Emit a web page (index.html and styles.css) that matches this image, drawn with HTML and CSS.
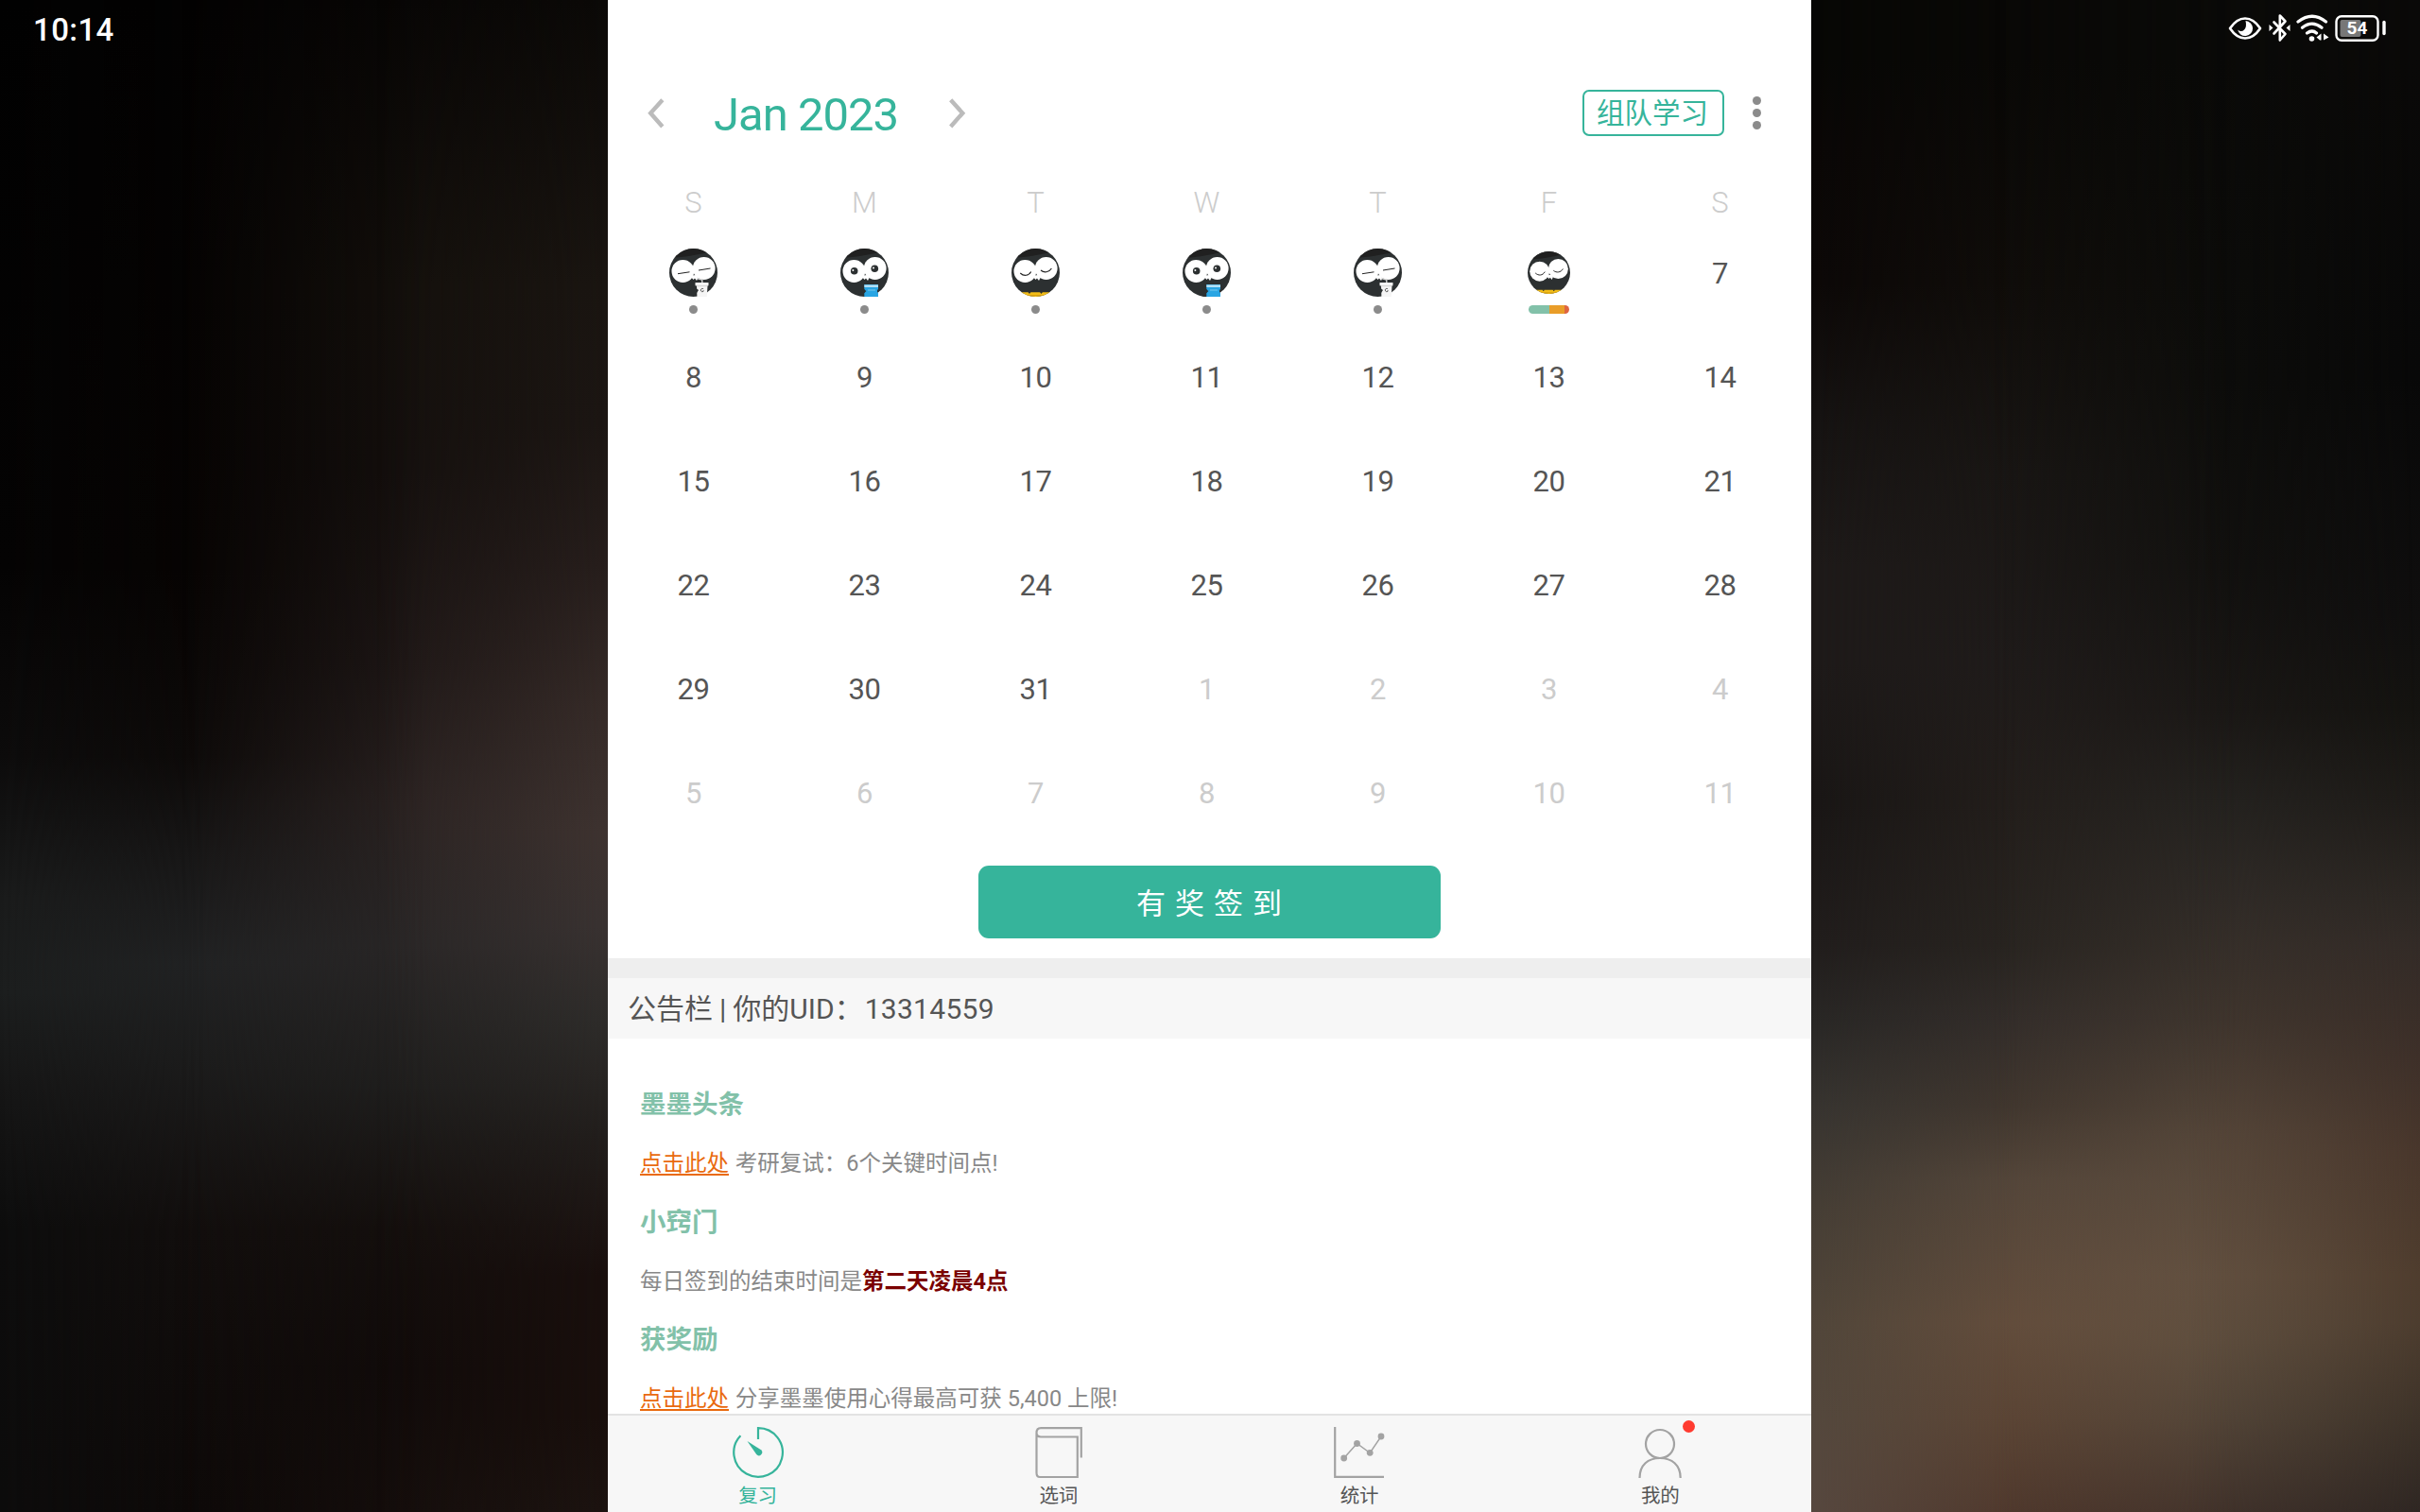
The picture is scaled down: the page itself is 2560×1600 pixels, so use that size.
FILE: index.html
```html
<!DOCTYPE html>
<html lang="zh-CN">
<head>
<meta charset="utf-8">
<title>Calendar</title>
<link rel="stylesheet" href="styles.css">
</head>
<body>
<svg width="0" height="0" class="defs">
  <defs>
    <clipPath id="disc"><circle cx="25.5" cy="25.5" r="25.5"/></clipPath>
    <symbol id="face" viewBox="0 0 51 51">
      <rect width="51" height="51" fill="#2c3031"/>
      <path d="M0 0H51V2C38 4 30 8 0 10Z" fill="#202020"/>
      <circle cx="14.4" cy="24" r="11.9" fill="#fff"/>
      <circle cx="36.7" cy="21" r="11.9" fill="#fff"/>
      <path d="M22 29L28 28L30.5 31L29 34L27 31.5L25.5 33Z" fill="#fff"/>
    </symbol>
    <symbol id="owl-drink" viewBox="0 0 51 51">
      <g clip-path="url(#disc)">
        <use href="#face" width="51" height="51"/>
        <path d="M9 26.7L21.5 24.8M31 23L43.5 21" stroke="#222" stroke-width="1" fill="none"/>
      </g>
      <path d="M29.5 31.5L34.8 33V37" stroke="#ddd" stroke-width="1.3" fill="none"/>
      <path d="M27.5 36H41.5V39.3H40.5L39.8 51H29.4L29 39.3H27.5Z" fill="#f5f5f5"/>
      <path d="M28.5 39.6H40.5" stroke="#ccc" stroke-width=".8"/>
      <path d="M36.1 42.7A1.7 1.7 0 1 0 36 45.4V44" stroke="#555" stroke-width=".9" fill="none"/>
      <path d="M28.4 42L31 44L29 47Z" fill="#2c3031"/>
    </symbol>
    <symbol id="owl-awake" viewBox="0 0 51 51">
      <g clip-path="url(#disc)">
        <use href="#face" width="51" height="51"/>
        <circle cx="14.7" cy="23.7" r="3.8" fill="#2c3031"/><circle cx="13.4" cy="23" r="1" fill="#fff"/>
        <circle cx="36.3" cy="21.2" r="3.8" fill="#2c3031"/><circle cx="35" cy="20.5" r="1" fill="#fff"/>
      </g>
      <path d="M25.3 38H40V43L39 44V46L40 47V51H25.3V47L26.3 46V44L25.3 43Z" fill="#29a5e3"/>
      <path d="M25.3 38.6H40" stroke="#7ac9ee" stroke-width="1"/>
      <path d="M25.3 40H40" stroke="#fff" stroke-width="1.3"/>
      <path d="M29 44H37" stroke="#7ac9ee" stroke-width="1"/>
      <path d="M24 43L27.5 45L24 48Z" fill="#2c3031"/>
    </symbol>
    <symbol id="owl-sleep" viewBox="0 0 51 51">
      <g clip-path="url(#disc)">
        <use href="#face" width="51" height="51"/>
        <path d="M9.3 26C13 29.5 18 29.2 20.7 24.5M31 23C34.5 26 39.7 25.5 42.4 21" stroke="#222" stroke-width="1.1" fill="none"/>
        <path d="M8 46.3H43V51H8Z" fill="#f3bd17"/>
        <path d="M8 49.5H43" stroke="#d69f10" stroke-width="1"/>
        <path d="M17.5 46h3l-1.5 2zM30 46h3l-1.5 2z" fill="#2c3031"/>
      </g>
    </symbol>
  </defs>
</svg>

<div class="screen">
  <aside class="side left">
    <i class="wash a"></i><i class="wash b"></i><i class="wash c"></i><i class="wash d"></i>
    <time class="clock">10:14</time>
  </aside>

  <main class="app">
    <header class="head">
      <svg class="chev" width="18" height="32" viewBox="0 0 18 32"><path d="M15.8 1.8L3.2 15.7L15.8 30"/></svg>
      <h1 class="month">Jan 2023</h1>
      <svg class="chev" width="18" height="32" viewBox="0 0 18 32"><path d="M1.7 1.8L14.3 15.7L1.7 30"/></svg>
      <button class="team">组队学习</button>
      <div class="more"><i></i><i></i><i></i></div>
    </header>

    <section class="weekdays"><span>S</span><span>M</span><span>T</span><span>W</span><span>T</span><span>F</span><span>S</span></section>
    <section class="days">
      <div class="done"><svg width="51" height="51"><use href="#owl-drink"/></svg><i class="dot"></i></div>
      <div class="done"><svg width="51" height="51"><use href="#owl-awake"/></svg><i class="dot"></i></div>
      <div class="done"><svg width="51" height="51"><use href="#owl-sleep"/></svg><i class="dot"></i></div>
      <div class="done"><svg width="51" height="51"><use href="#owl-awake"/></svg><i class="dot"></i></div>
      <div class="done"><svg width="51" height="51"><use href="#owl-drink"/></svg><i class="dot"></i></div>
      <div class="done today"><svg width="45" height="45"><use href="#owl-sleep"/></svg><i class="bar"></i></div>
      <div>7</div>
      <div>8</div><div>9</div><div>10</div><div>11</div><div>12</div><div>13</div><div>14</div>
      <div>15</div><div>16</div><div>17</div><div>18</div><div>19</div><div>20</div><div>21</div>
      <div>22</div><div>23</div><div>24</div><div>25</div><div>26</div><div>27</div><div>28</div>
      <div>29</div><div>30</div><div>31</div><div class="next">1</div><div class="next">2</div><div class="next">3</div><div class="next">4</div>
      <div class="next">5</div><div class="next">6</div><div class="next">7</div><div class="next">8</div><div class="next">9</div><div class="next">10</div><div class="next">11</div>
    </section>

    <button class="checkin">有奖签到</button>

    <div class="notice">公告栏<span class="sep">|</span>你的UID：<span class="uid">13314559</span></div>
    <section class="news">
      <h2>墨墨头条</h2>
      <p><a>点击此处</a> 考研复试：6个关键时间点!</p>
      <h2>小窍门</h2>
      <p>每日签到的结束时间是<b>第二天凌晨4点</b></p>
      <h2>获奖励</h2>
      <p><a>点击此处</a> 分享墨墨使用心得最高可获 <span class="amount">5,400</span> 上限!</p>
    </section>

    <nav class="tabs">
      <div class="tab active">
        <svg width="54" height="54" viewBox="0 0 54 54"><path d="M27 13V1.2A25.8 25.8 0 1 1 8.4 9.2" /><path class="solid" d="M15.5 15L30 24.2A3.4 3.4 0 1 1 25.2 29Z"/></svg>
        <span>复习</span>
      </div>
      <div class="tab">
        <svg width="54" height="54" viewBox="0 0 54 54"><path d="M3.5 6.5Q3.5 1.2 8 1.2H50.8V32.5M3.5 6V48.5Q3.5 53 7 53H46.8V10.5H8Q3.5 10.500 3.5 6"/></svg>
        <span>选词</span>
      </div>
      <div class="tab">
        <svg width="54" height="54" viewBox="0 0 54 54"><path d="M1.2 0V52.8H53"/><path class="thin" d="M10.7 33L24.5 17.5L38.2 27.5L50 10"/><g class="solid"><circle cx="10.7" cy="33" r="3.4"/><circle cx="24.5" cy="17.5" r="3.4"/><circle cx="38.2" cy="27.3" r="3.4"/><circle cx="50" cy="10" r="3.4"/></g></svg>
        <span>统计</span>
      </div>
      <div class="tab">
        <svg width="54" height="54" viewBox="0 0 54 54"><circle cx="27" cy="18" r="15"/><path d="M5.5 54C5.5 40 14.5 33 27 33S48.7 40 48.7 54"/></svg>
        <span>我的</span>
        <i class="badge"></i>
      </div>
    </nav>
  </main>

  <aside class="side right">
    <i class="wash a"></i><i class="wash b"></i><i class="wash c"></i><i class="wash d"></i>
    <svg class="status" width="170" height="32" viewBox="0 0 170 32">
      <g fill="none" stroke="#fff" stroke-width="2.6" stroke-linecap="round" stroke-linejoin="round">
        <path d="M3 16Q10 5.500 19 5.500T35 16Q28 26.500 19 26.500T3 16Z"/>
        <path d="M49.500 9.500L61.500 22L55.800 28.500V2.500L61.500 8.500L49.500 21.500" stroke-width="2.6"/>
        <path d="M75 9Q90 -2.500 104.500 9M79.500 15.200Q90 7 100 15.200M84.500 21Q90 17 94.500 21" stroke-width="3.2"/>
        <rect x="115.500" y="3.200" width="44" height="25.500" rx="5.500" stroke-width="2.4"/>
        <path d="M166 9.500V21.500" stroke-width="3.4"/>
      </g>
      <path d="M19.500 8A8 8 0 1 1 11.200 17.500Q15 20.500 18 17.500T19.500 8Z" fill="#fff"/>
      <path d="M44.500 12L48.500 15.500L44.500 19ZM66.500 12L62.500 15.500L66.500 19ZM99.500 21.500V28.500H98L94.500 25.500ZM102 21.500V28.500L107.500 25.500Z" fill="#fff"/>
      <circle cx="89.500" cy="27" r="2.800" fill="#fff"/>
      <rect x="119.500" y="7" width="22" height="18" rx="2" fill="#777"/>
      <text x="137.500" y="22.300" text-anchor="middle" class="pct">54</text>
    </svg>
  </aside>
</div>
</body>
</html>
```
FILE: styles.css
```css
* { box-sizing: border-box; }
body {
  margin: 0;
  width: 2560px;
  height: 1600px;
  overflow: hidden;
  font-family: Roboto, "Noto Sans CJK SC", sans-serif;
  color: #555;
}
h1, h2, p { margin: 0; font-weight: 400; }
button { font: inherit; padding: 0; border: 0; }
.defs { position: absolute; }

.screen {
  display: grid;
  grid-template-columns: 643px 1273px 644px;
  height: 1600px;
  background: #080706;
}

/* Wallpaper: four vertical gradients cross-faded from left to right */
.side { display: grid; grid-template: 1600px / 100%; }
.side > * { grid-area: 1 / 1; }
.wash.b { mask-image: linear-gradient(90deg, transparent 0, rgba(0,0,0,.5) 17%, #000 34%); }
.wash.c { mask-image: linear-gradient(90deg, transparent 30%, rgba(0,0,0,.5) 50%, #000 70%); }
.wash.d { mask-image: linear-gradient(90deg, transparent 62%, rgba(0,0,0,.5) 83%, #000 100%); }
.left .a { background: linear-gradient(#020202 0, #050404 600px, #0d0c0c 800px, #1a1b1b 950px, #1c1e1e 1050px, #161616 1150px, #0d0d0d 1300px, #0d0c0c 1600px); }
.left .b { background: linear-gradient(#030202 0, #070403 600px, #0d0a09 800px, #171616 900px, #212223 1020px, #1c1c1c 1120px, #120e0d 1300px, #0d0908 1600px); }
.left .c { background: linear-gradient(#080605 0, #14100c 300px, #15100e 500px, #1e1716 700px, #2a2221 850px, #292626 1000px, #1f1e1d 1150px, #140f0d 1300px, #110b0a 1450px, #150e0c 1600px); }
.left .d { background: linear-gradient(#0b0907 0, #1a1511 300px, #1c1613 450px, #271e1c 600px, #362b28 750px, #3e3330 880px, #393231 980px, #2e2c2a 1080px, #221e1c 1200px, #190f0d 1350px, #190f0c 1500px, #1c1310 1600px); }
.right .a { background: linear-gradient(#070705 60px, #0a0706 150px, #0c0807 300px, #161312 450px, #1e1a19 600px, #1e1a19 700px, #191615 850px, #211d1c 1000px, #292725 1080px, #373430 1170px, #463e35 1280px, #51463a 1400px, #54483d 1500px, #57483f 1600px); }
.right .b { background: linear-gradient(#090806 60px, #100d0a 300px, #191614 500px, #1f1b1a 700px, #231e1b 850px, #282420 1000px, #332d2a 1080px, #40362e 1170px, #54463a 1250px, #634d3c 1400px, #5c4535 1500px, #50392d 1600px); }
.right .c { background: linear-gradient(#0a0a08 60px, #0d0d0b 400px, #12110f 600px, #1b1816 750px, #252320 850px, #302b27 950px, #40362e 1080px, #56473a 1200px, #635141 1350px, #5f4f3f 1420px, #544639 1500px, #43342c 1600px); }
.right .d { background: linear-gradient(#0a0908 60px, #080808 400px, #0f0e0e 650px, #141310 750px, #1e1b18 850px, #2c2723 950px, #332b27 1000px, #3e3029 1120px, #49372c 1220px, #4f3d2e 1350px, #4d3d2f 1400px, #3e3329 1500px, #2f2723 1600px); }

.clock { z-index: 1; margin: 14px 0 0 35px; font-size: 33px; line-height: 35px; font-weight: 500; color: #fff; letter-spacing: .4px; }
.status { z-index: 1; justify-self: end; margin: 14px 34px 0 0; }
.pct { font: 700 19px Roboto, sans-serif; fill: #fff; }

.app {
  display: flex;
  flex-direction: column;
  height: 1600px;
  background: #fff;
  overflow: hidden;
}
.head {
  display: flex;
  align-items: center;
  height: 49px;
  margin-top: 95px;
  padding-left: 42px;
}
.chev { fill: none; stroke: #bbb; stroke-width: 4.4; }
.month {
  width: 301px;
  padding-left: 52px;
  font-size: 49px;
  line-height: 49px;
  color: #36b49b;
  padding-top: 3px;
  letter-spacing: -1px;
  white-space: nowrap;
}
.team {
  width: 150px;
  height: 49px;
  margin-left: 652px;
  padding: 1px 2px 0 0;
  border: 2px solid #36b49b;
  border-radius: 7px;
  background: none;
  color: #36b49b;
  font-size: 29.5px;
  line-height: 44px;
}
.more { display: flex; flex-direction: column; gap: 4px; margin-left: 30px; }
.more i { width: 9px; height: 9px; border-radius: 50%; background: #8b8b8b; }

.weekdays, .days {
  display: grid;
  grid-template-columns: repeat(7, 181px);
  text-align: center;
  font-size: 31px;
}
.weekdays { height: 90px; padding-top: 51px; line-height: 40px; color: #ccc; font-weight: 300; }
.days { grid-auto-rows: 110px; line-height: 112px; letter-spacing: -.5px; }
.next { color: #ccc; }
.done { display: flex; flex-direction: column; align-items: center; padding-top: 29px; }
.done svg { flex: none; }
.dot { width: 9px; height: 9px; margin-top: 9px; border-radius: 50%; background: #8b8b8b; }
.today { padding-top: 32px; }
.bar {
  width: 43px;
  height: 9px;
  margin-top: 12px;
  border-radius: 5px;
  background: linear-gradient(90deg, #82c1a9 22px, #e99d29 22px 38px, #de6541 38px);
}

.checkin {
  flex: none;
  width: 489px;
  height: 77px;
  margin: 22px 0 21px 392px;
  padding: 0 0 2px 9px;
  border-radius: 11px;
  background: #36b49b;
  color: #fff;
  font-size: 31px;
  letter-spacing: 10px;
}
.notice {
  flex: none;
  height: 85px;
  padding-left: 21px;
  border-top: 21px solid #eee;
  background: #f7f7f7;
  font-size: 30px;
  line-height: 65px;
}
.sep { margin: 0 7px; }
.uid { margin-left: 2px; letter-spacing: .3px; }
.news {
  flex: 1;
  min-height: 0;
  overflow: hidden;
  padding: 39px 34px 0;
  font-size: 23.5px;
  line-height: 62.25px;
  color: #888;
}
.news h2 { font-size: 27.5px; font-weight: 700; color: #82c1a9; line-height: 62.25px; }
.news p { height: 62.25px; }
.news a { margin-right: 1px; color: #e96a0e; text-decoration: underline; text-decoration-thickness: 2px; text-underline-offset: 3px; }
.news b { color: #7a0000; }

.tabs {
  flex: none;
  display: grid;
  grid-template-columns: repeat(4, 1fr);
  height: 104px;
  border-top: 2px solid #e3e3e3;
  background: #f7f7f7;
}
.tab {
  position: relative;
  display: flex;
  flex-direction: column;
  align-items: center;
  padding: 12px 1px 0 0;
  font-size: 20.5px;
  line-height: 38px;
}
.tab svg { overflow: visible; fill: none; stroke: #a3a3a3; stroke-width: 2.2; }
.tab .solid { fill: #a3a3a3; stroke: none; }
.tab .thin { stroke-width: 1.5; }
.tab.active { color: #36b49b; }
.active svg { stroke: #36b49b; }
.active .solid { fill: #36b49b; }
.badge {
  position: absolute;
  left: 182px;
  top: 5px;
  width: 13px;
  height: 13px;
  border-radius: 50%;
  background: #ff3b30;
}
```
